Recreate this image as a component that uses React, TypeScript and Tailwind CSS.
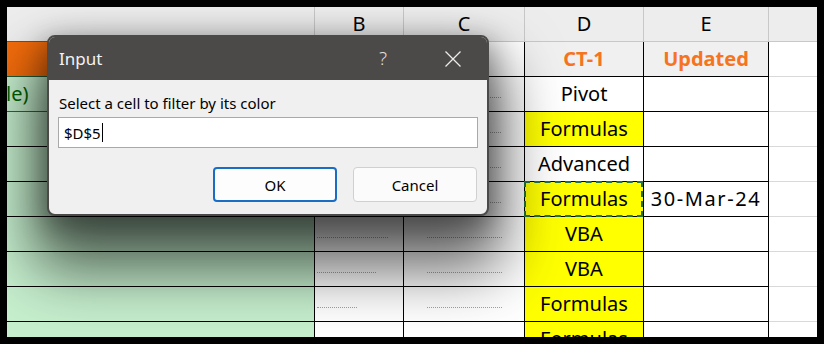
import React from "react";

type Row = {
  a: string;
  aText?: string;
  b?: string;
  c?: string;
  d: string;
  dBg: string;
  e?: string;
  dashed?: boolean;
  hdr?: boolean;
};

const rows: Row[] = [
  { a: "bg-[#f36c0c] border-b-[#1d5a36]", d: "CT-1", dBg: "bg-[#f0f0f0]", e: "Updated", hdr: true },
  { a: "bg-[#c6efce] border-b-[#2a6a3f]", aText: "le)", c: "w-[74px]", d: "Pivot", dBg: "bg-white" },
  { a: "bg-[#c6efce]", c: "w-[74px]", d: "Formulas", dBg: "bg-[#ffff00]" },
  { a: "bg-[#c6efce]", c: "w-[74px]", d: "Advanced", dBg: "bg-white" },
  { a: "bg-[#c6efce]", c: "w-[74px]", d: "Formulas", dBg: "bg-[#ffff00]", e: "30-Mar-24", dashed: true },
  { a: "bg-[#c6efce]", b: "w-[71px]", c: "w-[75px]", d: "VBA", dBg: "bg-[#ffff00]" },
  { a: "bg-[#c6efce]", b: "w-[59px]", c: "w-[75px]", d: "VBA", dBg: "bg-[#ffff00]" },
  { a: "bg-[#c6efce]", b: "w-[40px]", c: "w-[75px]", d: "Formulas", dBg: "bg-[#ffff00]" },
  { a: "bg-[#c6efce]", d: "Formulas", dBg: "bg-[#ffff00]" },
];

function Mark({ w }: { w: string }) {
  return <span className={`block h-[3px] mt-[4px] border-b border-dotted border-[#a3a3a3] ${w}`} />;
}

export default function App() {
  return (
    <div className="w-[824px] h-[344px] bg-black pl-[7px] pt-[7px]">
      <div className="relative w-[810px] h-[330px] overflow-hidden bg-white font-['Noto_Sans',sans-serif] text-black">
        {/* column header */}
        <div className="flex h-[35px] bg-[#ededed] text-[20px] leading-none">
          <div className="w-[308px] border-r border-b border-r-[#c8c8c8] border-b-[#2e6e4e]" />
          <div className="w-[89px] flex items-center justify-center border-r border-b border-[#c8c8c8]">B</div>
          <div className="w-[121px] flex items-center justify-center border-r border-b border-[#c8c8c8]">C</div>
          <div className="w-[119px] flex items-center justify-center border-r border-b border-[#c8c8c8]">D</div>
          <div className="w-[125px] flex items-center justify-center border-r border-b border-[#c8c8c8]">E</div>
          <div className="w-[48px] border-b border-[#c8c8c8]" />
        </div>

        {rows.map((r, i) => (
          <div key={i} className="flex h-[35px] text-[20px] leading-none">
            <div className={`w-[308px] flex items-center overflow-hidden border-r border-b border-black ${r.a}`}>
              {r.aText && <span className="-ml-[1px] text-[#006100]">{r.aText}</span>}
            </div>
            <div className="w-[89px] flex items-center pl-[2px] border-r border-b border-black bg-white">
              {r.b && <Mark w={r.b} />}
            </div>
            <div className="w-[121px] flex items-center pl-[23px] border-r border-b border-black bg-white">
              {r.c && <Mark w={r.c} />}
            </div>
            <div
              className={`relative w-[119px] flex items-center justify-center border-r border-b border-black ${r.dBg} ${
                r.hdr ? "font-bold text-[#f6741f]" : ""
              }`}
            >
              {r.d}
              {r.dashed && (
                <div className="absolute -left-[1px] -top-[1px] right-0 -bottom-[1px] border-2 border-dashed border-[#217346]" />
              )}
            </div>
            <div
              className={`w-[125px] flex items-center justify-center border-r border-b border-black ${
                r.hdr ? "bg-[#f0f0f0] font-bold text-[#f6741f]" : "bg-white tracking-[1.6px]"
              }`}
            >
              {r.e}
            </div>
            <div className="w-[48px] border-b border-[#d9d9d9] bg-white" />
          </div>
        ))}

        {/* dialog */}
        <div className="absolute left-[40px] top-[28px] w-[442px] h-[181px] rounded-[8px] border-2 border-[#4b4a48] bg-[#f0f0f0] overflow-hidden flex flex-col shadow-[0_40px_60px_14px_rgba(0,0,0,0.6),0_8px_26px_4px_rgba(0,0,0,0.3)]">
          <div className="h-[43px] shrink-0 bg-[#4b4a48] flex items-center pl-[10px] text-[17px] text-[#f3f3f3]">
            <span>Input</span>
            <span className="ml-auto w-[46px] text-center text-[19px] font-light text-[#dedede]">?</span>
            <span className="ml-[24px] mr-[11px] w-[46px] flex justify-center">
              <svg width="16" height="16" viewBox="0 0 16 16">
                <path d="M0.5 0.5 L15.5 15.5 M15.5 0.5 L0.5 15.5" stroke="#ececec" strokeWidth="1.3" fill="none" />
              </svg>
            </span>
          </div>
          <div className="flex flex-col text-[15px] leading-[20px] text-black">
            <div className="mt-[13px] pl-[10px]">Select a cell to filter by its color</div>
            <div className="mt-[4px] ml-[9px] w-[420px] h-[31px] bg-white border border-[#a9a9a9] flex items-center pl-[5px]">
              <span>$D$5</span>
              <span className="ml-[1px] w-[1px] h-[19px] bg-black" />
            </div>
            <div className="mt-[19px] flex justify-end gap-[16px] pr-[10px]">
              <div className="w-[124px] h-[35px] rounded-[4px] border-2 border-[#1a6dc4] bg-[#fdfdfd] flex items-center justify-center">
                OK
              </div>
              <div className="w-[124px] h-[35px] rounded-[4px] border border-[#d0d0d0] bg-[#fbfbfb] flex items-center justify-center">
                Cancel
              </div>
            </div>
          </div>
        </div>
      </div>
    </div>
  );
}
